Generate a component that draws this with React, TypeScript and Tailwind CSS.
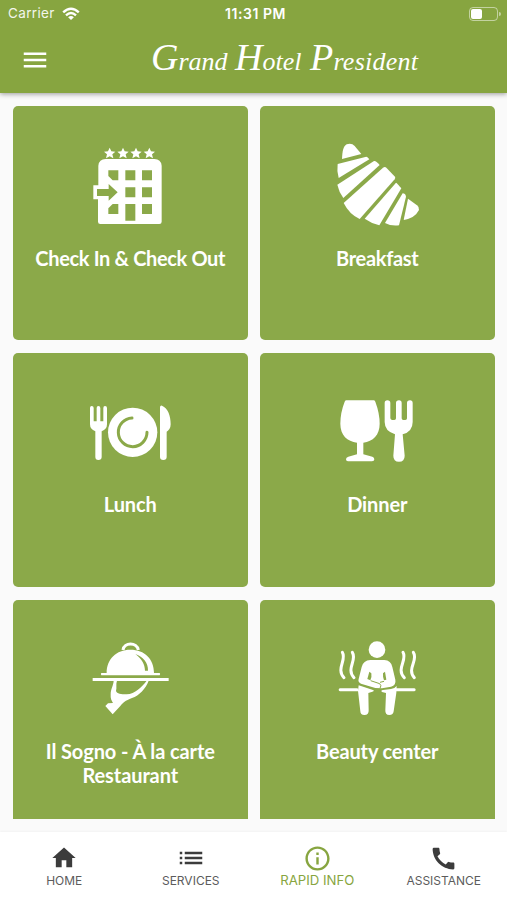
import type { ReactNode } from "react";
import {
  MdCall,
  MdHome,
  MdInfoOutline,
  MdList,
  MdMenu,
} from "react-icons/md";

const STAR = "M0 -17 L5 -6 L17 -5 L8 3 L11 15 L0 9 L-11 15 L-8 3 L-17 -5 L-5 -6 Z";

const HotelIcon = () => (
  <svg viewBox="0 0 300 300" className="h-[100px] w-[100px]" fill="#fff">
    {[89, 129, 168, 208].map((x) => (
      <path key={x} d={STAR} transform={`translate(${x} 55)`} />
    ))}
    <path d="M55 92 Q57 72 77 72 H223 Q243 72 245 92 V260 Q245 267 238 267 H61 Q54 267 54 260 V193 H40 V151 H55 Z" />
    <g fill="#8ba949">
      <path d="M85 106 H115 V136 H98 L85 123 Z" />
      <path d="M136 106 H166 V136 H136 Z M186 106 H216 V136 H186 Z" />
      <path d="M136 157 H166 V187 H136 Z M186 157 H216 V187 H186 Z" />
      <path d="M186 207 H216 V237 H186 Z M136 207 H166 V257 H136 Z" />
      <path d="M98 207 H115 V237 H85 V220 Z" />
      <path d="M51 162 H86 V147 L113 172 L86 197 V183 H51 Z" />
    </g>
  </svg>
);

const CroissantIcon = () => (
  <svg viewBox="0 0 315 300" className="h-[100px] w-[105px]" fill="#fff">
    <path d="M51 72 C52 52 54 34 65 28 Q80 23 89 33 L109 57 Z" />
    <path d="M38 87 L124 65 Q128 65 133 73 L41 129 Q35 107 38 87 Z" />
    <path d="M37 149 L147 78 Q152 76 164 90 L55 189 Q42 172 37 149 Z" />
    <path d="M56 204 L174 98 Q180 94 184 98 L210 125 Q212 129 209 133 L104 252 Q73 238 56 204 Z" />
    <path d="M119 251 L213 143 Q217 145 229 160 L163 271 Q139 265 119 251 Z" />
    <path d="M180 264 L233 175 Q241 175 243 185 L222 271 Q198 274 180 264 Z" />
    <path d="M236 255 L249 191 L276 211 Q284 217 282 225 Q270 249 236 255 Z" />
  </svg>
);

const LunchIcon = () => (
  <svg viewBox="0 0 300 255" className="h-[85px] w-[100px]" fill="#fff">
    <path d="M30 57 Q30 51 35 51 Q41 51 41 57 V97 H50 V57 Q50 51 55 51 Q61 51 61 57 V97 H70 V57 Q70 51 75 51 Q81 51 81 57 V106 Q81 121 65 127 V204 Q65 213 55 213 Q46 213 46 204 V127 Q30 121 30 106 Z" />
    <circle cx="158" cy="130" r="74" />
    <path
      d="M156 87 A43 43 0 1 0 201 130"
      fill="none"
      stroke="#8ba949"
      strokeWidth="9"
      strokeLinecap="round"
    />
    <path d="M240 55 Q240 49 246 50 C264 58 272 80 272 106 C272 118 266 125 260 128 V204 Q260 213 250 213 Q240 213 240 204 Z" />
  </svg>
);

const DinnerIcon = () => (
  <svg viewBox="0 0 285 255" className="h-[85px] w-[95px]" fill="#fff">
    <path d="M49 34 H131 Q134 34 136 38 Q149 73 149 104 C149 138 129 157 100 161 V196 L127 203 Q133 205 133 211 Q133 217 126 217 H54 Q48 217 48 211 Q48 205 55 203 L81 196 V161 C52 157 31 139 31 104 Q31 71 44 38 Q46 34 49 34 Z" />
    <path d="M164 42 Q164 34 172 34 Q181 34 181 42 V88 Q182 93 187 93 H193 Q198 93 198 88 V42 Q198 34 207 34 Q215 34 215 42 V88 Q215 93 220 93 H226 Q231 93 231 88 V42 Q231 34 240 34 Q248 34 248 42 V99 Q248 128 218 136 L224 200 Q224 218 207 218 Q190 218 190 200 L195 136 Q164 126 164 99 Z" />
  </svg>
);

const ClocheIcon = () => (
  <svg viewBox="0 0 300 270" className="h-[90px] w-[100px]" fill="#fff">
    <path d="M129 48 C132 24 171 24 175 48" fill="none" stroke="#fff" strokeWidth="9" />
    <path d="M64 117 H80 C80 75 109 47 151 47 C194 47 222 75 222 117 H239 Q242 120 239 124 H64 Q61 120 64 117 Z" />
    <path d="M166 60 C190 69 205 87 204 110 H195 C194 90 187 77 166 60 Z" fill="#8ba949" />
    <path d="M38 132 H266 V141 H38 Z" />
    <path d="M101 140 H111 C107 150 111 160 108 171 C111 179 123 181 140 181 C165 179 185 160 200 140 H206 C197 164 178 184 156 192 C135 200 129 206 121 216 L98 241 L76 216 L84 208 L99 207 C95 201 91 194 92 181 C92 164 100 156 101 140 Z" />
  </svg>
);

const SaunaIcon = () => (
  <svg viewBox="0 0 315 270" className="h-[90px] w-[105px]" fill="#fff">
    <circle cx="156" cy="47" r="25" />
    <path
      d="M52 55 C66 78 32 104 57 131 M82 55 C97 78 62 104 87 131 M234 55 C248 78 212 104 238 131 M265 55 C281 78 244 104 268 131"
      fill="none"
      stroke="#fff"
      strokeWidth="9"
      strokeLinecap="round"
    />
    <path d="M45 163 H98 L101 172 H45 Q41 171 41 167 Q41 164 45 163 Z M213 163 H268 Q272 164 272 167 Q272 171 268 172 H211 Z" />
    <path d="M136 78 H178 Q198 79 202 99 L211 137 Q214 153 198 158 L171 163 L151 162 L108 149 Q98 145 101 135 L110 99 Q115 79 136 78 Z" />
    <path d="M101 154 L144 168 Q150 171 142 173 L130 177 L131 229 Q132 243 118 243 Q106 243 106 232 L99 170 Z M215 156 L214 176 L206 232 Q205 243 193 243 Q180 243 181 229 L183 177 L171 174 Q166 170 174 168 L198 165 Q209 164 215 156 Z" />
    <g fill="#8ba949">
      <path d="M133 113 L139 118 Q141 130 136 139 L127 135 Z" />
      <path d="M180 113 L184 137 L177 139 Q173 127 174 118 Z" />
    </g>
    <path
      d="M137 140 L164 149 Q171 154 165 163 M165 145 L177 142"
      fill="none"
      stroke="#8ba949"
      strokeWidth="3"
    />
  </svg>
);

type Card = { label: string; icon: ReactNode; className: string };

const cards: Card[] = [
  { label: "Check In & Check Out", icon: <HotelIcon />, className: "tracking-[-0.35px]" },
  { label: "Breakfast", icon: <CroissantIcon />, className: "tracking-[-0.3px]" },
  { label: "Lunch", icon: <LunchIcon />, className: "tracking-[-0.1px]" },
  { label: "Dinner", icon: <DinnerIcon />, className: "tracking-[-0.1px]" },
  { label: "Il Sogno - À la carte Restaurant", icon: <ClocheIcon />, className: "tracking-[-0.1px]" },
  { label: "Beauty center", icon: <SaunaIcon />, className: "tracking-[-0.15px]" },
];

const tabs = [
  { label: "HOME", icon: <MdHome size={28} />, active: false },
  { label: "SERVICES", icon: <MdList size={30} />, active: false },
  { label: "RAPID INFO", icon: <MdInfoOutline size={29} />, active: true },
  { label: "ASSISTANCE", icon: <MdCall size={29} />, active: false },
];

const StatusBar = () => (
  <div className="grid h-[28px] grid-cols-3 items-center pr-[6px] pl-[8px] text-[13.5px] leading-none">
    <div className="flex items-center gap-[7px]">
      <span className="tracking-[0.35px] opacity-90">Carrier</span>
      <svg viewBox="0 0 18 14" className="h-[14px] w-[18px]" fill="none" stroke="#fff" strokeWidth="2.4">
        <path d="M1.2 5.3 Q9 -1.9 16.8 5.3 M4 8.3 Q9 3.8 14 8.3" />
        <path d="M9 13 L6.1 10.2 Q9 7.9 11.9 10.2 Z" fill="#fff" stroke="none" />
      </svg>
    </div>
    <div className="pl-[2px] text-center text-[14px] font-semibold tracking-[0.55px]">11:31 PM</div>
    <div className="flex items-center justify-end gap-px">
      <div className="h-[14px] w-[29px] rounded-[4px] border border-white/50 p-px">
        <div className="h-full w-[11px] rounded-[2px] bg-white" />
      </div>
      <div className="h-[4px] w-[1.5px] rounded-r bg-white/50" />
    </div>
  </div>
);

const Header = () => (
  <header className="z-10 h-[93px] shrink-0 bg-[#87a540] text-white shadow-[0_1px_5px_rgba(0,0,0,0.4)]">
    <StatusBar />
    <div className="flex h-[64px] items-center pl-[20px]">
      <MdMenu size={30} />
      <h1 className="ml-[101px] flex pb-[2px] font-['Liberation_Serif',serif] text-[26px] leading-[40px] whitespace-nowrap italic">
        <span className="w-[84px]">
          <span className="text-[38px]">G</span>rand
        </span>
        <span className="w-[75px]">
          <span className="text-[38px]">H</span>otel
        </span>
        <span className="tracking-[0.25px]">
          <span className="text-[38px]">P</span>resident
        </span>
      </h1>
    </div>
  </header>
);

const InfoCard = ({ label, icon, className }: Card) => (
  <div className="flex h-[234.25px] flex-col items-center rounded-[5px] bg-[#8ba949] px-[20px] pt-[29px]">
    <div className="flex h-[100px] shrink-0 items-center">{icon}</div>
    <div
      className={`mt-[10.5px] text-center font-['Lato',sans-serif] text-[20px] leading-[24px] font-bold text-white ${className}`}
    >
      {label}
    </div>
  </div>
);

export default function App() {
  return (
    <div className="flex h-[900px] w-[507px] flex-col overflow-hidden bg-[#fafafa] font-['Inter',sans-serif]">
      <Header />
      <main className="mt-[13px] h-[713px] shrink-0 overflow-hidden">
        <div className="grid grid-cols-2 gap-[12.5px] pr-[12.5px] pl-[13px]">
          {cards.map((card) => (
            <InfoCard key={card.label} {...card} />
          ))}
        </div>
      </main>
      <nav className="mt-[13px] grid h-[68px] grid-cols-4 bg-white pl-px shadow-[0_-1px_2px_rgba(0,0,0,0.03)]">
        {tabs.map(({ label, icon, active }) => (
          <div
            key={label}
            className={`flex flex-col items-center pt-[11px] ${active ? "text-[#87a540]" : "text-[#3c3c3c]"}`}
          >
            <div className="flex h-[30px] items-center">{icon}</div>
            <span
              className={`leading-[15px] whitespace-nowrap ${active ? "text-[13.2px]" : "text-[12px] text-[#5c5c5c]"}`}
            >
              {label}
            </span>
          </div>
        ))}
      </nav>
    </div>
  );
}
